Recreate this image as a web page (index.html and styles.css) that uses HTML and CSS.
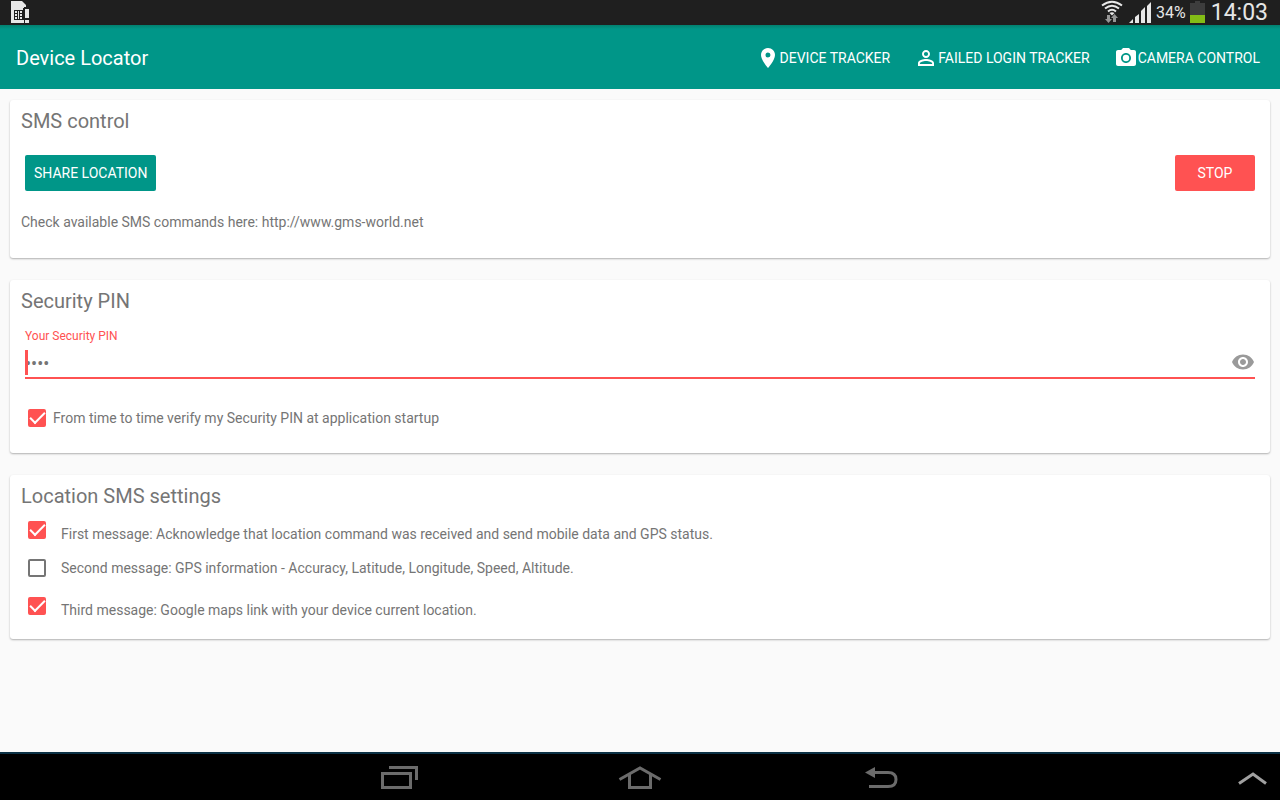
FILE: index.html
```html
<!DOCTYPE html>
<html lang="en">
  <head>
    <meta charset="UTF-8" />
    <meta name="viewport" content="width=device-width, initial-scale=1.0" />
    <title>Device Locator</title>
    <link rel="stylesheet" href="styles.css">
  </head>
  <body>
    <div class="status-bar">
      <svg width="20" height="25" viewBox="0 0 20 25">
        <path fill="#e8e8e8" d="M1 1h11l4 4v18H1z" />
        <path fill="#1f1f1f" d="M4 10h9v10H4z" />
        <path fill="#e8e8e8" d="M5 11h2v2H5zM5 14h2v2H5zM5 17h2v2H5zM8 11h1v8H8zM10 11h2v2h-2zM10 14h2v2h-2zM10 17h2v2h-2z" />
        <path fill="#1f1f1f" d="M13 8h1V7h6v18h-7z" />
        <path fill="#e8e8e8" d="M13 20h1v3h-1zM15 9h4v9h-4zM15 20h4v3h-4z" />
      </svg>
      <div class="status-right">
        <svg width="24" height="25" viewBox="0 0 24 25">
          <g fill="none" stroke="#e8e8e8" stroke-width="2">
            <path d="M2 5.500Q12-2 22 5.500" />
            <path d="M5 8.500Q12 3 19 8.500" />
            <path d="M8 11.500Q12 8 16 11.500" />
          </g>
          <path fill="#e8e8e8" d="M9.500 13q2.500-1.500 5 0L12 15.500z" />
          <path fill="#969696" d="M7 15h3v4h2l-3.500 4L5 19h2zM14.500 14l3.500 4h-2v4h-3v-4h-2z" />
        </svg>
        <svg width="24" height="25" viewBox="0 0 24 25">
          <path fill="#e8e8e8" d="M1 23l4-4v4zM7 17l4-3v9H7zM13 11l4-4v16h-4zM19 6l4-4v21h-4z" />
        </svg>
        <span class="percent">34%</span>
        <svg width="15" height="25" viewBox="0 0 15 25">
          <path fill="#3d3d3d" d="M5 1h5v2h5v12H0V3h5z" />
          <path fill="#83bd16" d="M0 15h15v8H0z" />
        </svg>
        <span class="clock">14:03</span>
      </div>
    </div>

    <header class="app-bar">
      <h1>Device Locator</h1>
      <nav class="menu">
        <button type="button">
          <svg width="24" height="24" viewBox="0 0 24 24"><path fill="#fff" d="M12 2C8.130 2 5 5.130 5 9c0 5.250 7 13 7 13s7-7.750 7-13c0-3.870-3.130-7-7-7zm0 9.500a2.500 2.500 0 1 1 0-5 2.500 2.500 0 0 1 0 5z" /></svg>
          DEVICE TRACKER
        </button>
        <button type="button">
          <svg width="24" height="24" viewBox="0 0 24 24"><path fill="#fff" d="M12 5.900a2.100 2.100 0 1 1 0 4.200 2.100 2.100 0 0 1 0-4.200m0 9c2.970 0 6.100 1.460 6.100 2.100v1.100H5.900V17c0-.64 3.130-2.100 6.100-2.100M12 4C9.790 4 8 5.790 8 8s1.790 4 4 4 4-1.790 4-4-1.790-4-4-4zm0 9c-2.670 0-8 1.340-8 4v3h16v-3c0-2.660-5.330-4-8-4z" /></svg>
          FAILED LOGIN TRACKER
        </button>
        <button type="button">
          <svg width="24" height="24" viewBox="0 0 24 24"><circle fill="#fff" cx="12" cy="12" r="3.200" /><path fill="#fff" d="M9 2L7.170 4H4c-1.100 0-2 .9-2 2v12c0 1.100.9 2 2 2h16c1.100 0 2-.9 2-2V6c0-1.100-.9-2-2-2h-3.170L15 2H9zm3 15c-2.760 0-5-2.240-5-5s2.240-5 5-5 5 2.240 5 5-2.240 5-5 5z" /></svg>
          CAMERA CONTROL
        </button>
      </nav>
    </header>

    <main class="content">
      <section class="card">
        <h2>SMS control</h2>
        <div class="actions">
          <button type="button" class="btn btn-share">SHARE LOCATION</button>
          <button type="button" class="btn btn-stop">STOP</button>
        </div>
        <p class="hint">Check available SMS commands here: <a href="http://www.gms-world.net">http://www.gms-world.net</a></p>
      </section>

      <section class="card">
        <h2>Security PIN</h2>
        <div class="field">
          <label for="pin">Your Security PIN</label>
          <div class="pin-row">
            <input type="password" id="pin" value="1234" />
            <span class="caret"></span>
            <button type="button" aria-label="Show PIN">
              <svg width="24" height="24" viewBox="0 0 24 24"><path fill="#9a9a9a" d="M12 4.500C7 4.500 2.730 7.610 1 12c1.730 4.390 6 7.500 11 7.500s9.270-3.110 11-7.500c-1.730-4.390-6-7.500-11-7.500zM12 17c-2.760 0-5-2.240-5-5s2.240-5 5-5 5 2.240 5 5-2.240 5-5 5zm0-8c-1.660 0-3 1.340-3 3s1.340 3 3 3 3-1.340 3-3-1.340-3-3-3z" /></svg>
            </button>
          </div>
        </div>
        <div class="verify">
          <input type="checkbox" id="verify" checked />
          <label for="verify">From time to time verify my Security PIN at application startup</label>
        </div>
      </section>

      <section class="card">
        <h2>Location SMS settings</h2>
        <div class="settings">
          <div class="setting setting-low">
            <input type="checkbox" id="first" checked />
            <label for="first">First message: Acknowledge that location command was received and send mobile data and GPS status.</label>
          </div>
          <div class="setting">
            <input type="checkbox" id="second" />
            <label for="second">Second message: GPS information - Accuracy, Latitude, Longitude, Speed, Altitude.</label>
          </div>
          <div class="setting setting-low">
            <input type="checkbox" id="third" checked />
            <label for="third">Third message: Google maps link with your device current location.</label>
          </div>
        </div>
      </section>
    </main>

    <footer class="nav-bar">
      <div class="nav-main">
        <button type="button" aria-label="Recent apps">
          <svg width="44" height="32" viewBox="0 0 44 32" fill="none" stroke="#6b6b6b" stroke-width="3"><path d="M6.500 12.500h28v14h-28zM13 6.500h27.500V19" /></svg>
        </button>
        <button type="button" aria-label="Home">
          <svg width="44" height="32" viewBox="0 0 44 32" fill="none" stroke="#6b6b6b" stroke-width="3"><path d="M1.500 18.500L22 7l20.500 11.500M11.500 13v13.500h21V13" /></svg>
        </button>
        <button type="button" aria-label="Back">
          <svg width="44" height="32" viewBox="0 0 44 32"><path fill="none" stroke="#6b6b6b" stroke-width="3" d="M12 11.500h16q8 0 8 7t-8 7H9" /><path fill="#6b6b6b" d="M5 11.500L15 6v11z" /></svg>
        </button>
      </div>
      <button type="button" aria-label="Open tray">
        <svg width="32" height="32" viewBox="0 0 32 32" fill="none" stroke="#a0a0a0" stroke-width="3"><path d="M3 22.500L17 13l13 9.500" /></svg>
      </button>
    </footer>
  </body>
</html>
```

FILE: styles.css
```css
* {
  box-sizing: border-box;
}

body {
  margin: 0;
  min-height: 100vh;
  display: flex;
  flex-direction: column;
  background-color: #fafafa;
  color: #757575;
  font-family: Roboto, sans-serif;
  font-size: 14px;
}

button {
  padding: 0;
  border: none;
  background: none;
  color: #fff;
  font: inherit;
  cursor: pointer;
}

svg {
  display: block;
}

.status-bar {
  display: flex;
  justify-content: space-between;
  height: 25px;
  padding: 0 12px 0 10px;
  background-color: #1f1f1f;
  color: #e6e6e6;
}

.status-right {
  display: flex;
  align-items: center;
  gap: 4px;
}

.percent {
  font-size: 16px;
}

.clock {
  margin-left: 2px;
  font-size: 23px;
  line-height: 26px;
}

.app-bar {
  display: flex;
  justify-content: space-between;
  align-items: center;
  height: 64px;
  padding: 2px 20px 0 16px;
  background: linear-gradient(#02806f, #009688 4px);
  color: #fff;
}

h1 {
  margin: 0;
  font-size: 20px;
  font-weight: 400;
}

.menu {
  display: flex;
  gap: 24px;
}

.menu button {
  display: flex;
  align-items: center;
}

.content {
  flex: 1;
  display: flex;
  flex-direction: column;
  gap: 22px;
  padding: 11px 10px;
}

.card {
  background-color: #fff;
  border-radius: 3px;
  box-shadow: 0 1px 2px rgba(0, 0, 0, 0.3);
}

h2 {
  margin: 0;
  padding-left: 11px;
  font-size: 20px;
  font-weight: 400;
  line-height: 42px;
}

.actions {
  display: flex;
  justify-content: space-between;
  padding: 13px 15px 0;
}

.btn {
  height: 36px;
  border-radius: 2px;
}

.btn-share {
  padding: 0 9px;
  background-color: #009688;
}

.btn-stop {
  width: 80px;
  background-color: #ff5252;
}

.hint {
  margin: 0;
  padding: 21px 11px 26px;
  line-height: 20px;
}

.hint a {
  color: inherit;
  text-decoration: none;
}

.field {
  padding: 6px 15px 0;
}

.field label {
  display: block;
  color: #ff5252;
  font-size: 12px;
  line-height: 16px;
}

.pin-row {
  position: relative;
  display: flex;
  align-items: center;
  height: 35px;
  padding-top: 2px;
  border-bottom: 2px solid #ff5252;
}

.pin-row input {
  flex: 1;
  height: 28px;
  padding: 4px 0 0;
  border: none;
  outline: none;
  background: none;
  color: #757575;
  font-family: Roboto, sans-serif;
  font-size: 18px;
}

.caret {
  position: absolute;
  left: 0;
  bottom: 2px;
  width: 3px;
  height: 25px;
  background-color: #ff5252;
}

input[type="checkbox"] {
  appearance: none;
  flex: none;
  width: 18px;
  height: 18px;
  margin: 0;
  border: 2px solid #757575;
  border-radius: 2px;
}

input[type="checkbox"]:checked {
  display: grid;
  place-items: center;
  border-color: #ff5252;
  background-color: #ff5252;
}

/* check mark */
input[type="checkbox"]:checked::before {
  content: "";
  width: 13px;
  height: 6px;
  border: solid #fff;
  border-width: 0 0 2px 2px;
  transform: translateY(-2px) rotate(-45deg);
}

.verify {
  display: flex;
  align-items: center;
  gap: 7px;
  padding: 29px 18px 25px;
  line-height: 20px;
}

.settings {
  display: flex;
  flex-direction: column;
  gap: 18px;
  padding: 3px 18px 23px;
}

.setting {
  display: flex;
  align-items: center;
  gap: 15px;
  height: 20px;
  line-height: 22px;
}

.setting-low label {
  padding-top: 8px;
}

.nav-bar {
  display: flex;
  align-items: center;
  height: 48px;
  padding: 0 12px;
  border-top: 2px solid #0b3145;
  background-color: #000;
}

.nav-main {
  flex: 1;
  display: flex;
  justify-content: center;
  gap: 198px;
  padding-left: 32px;
}
```
